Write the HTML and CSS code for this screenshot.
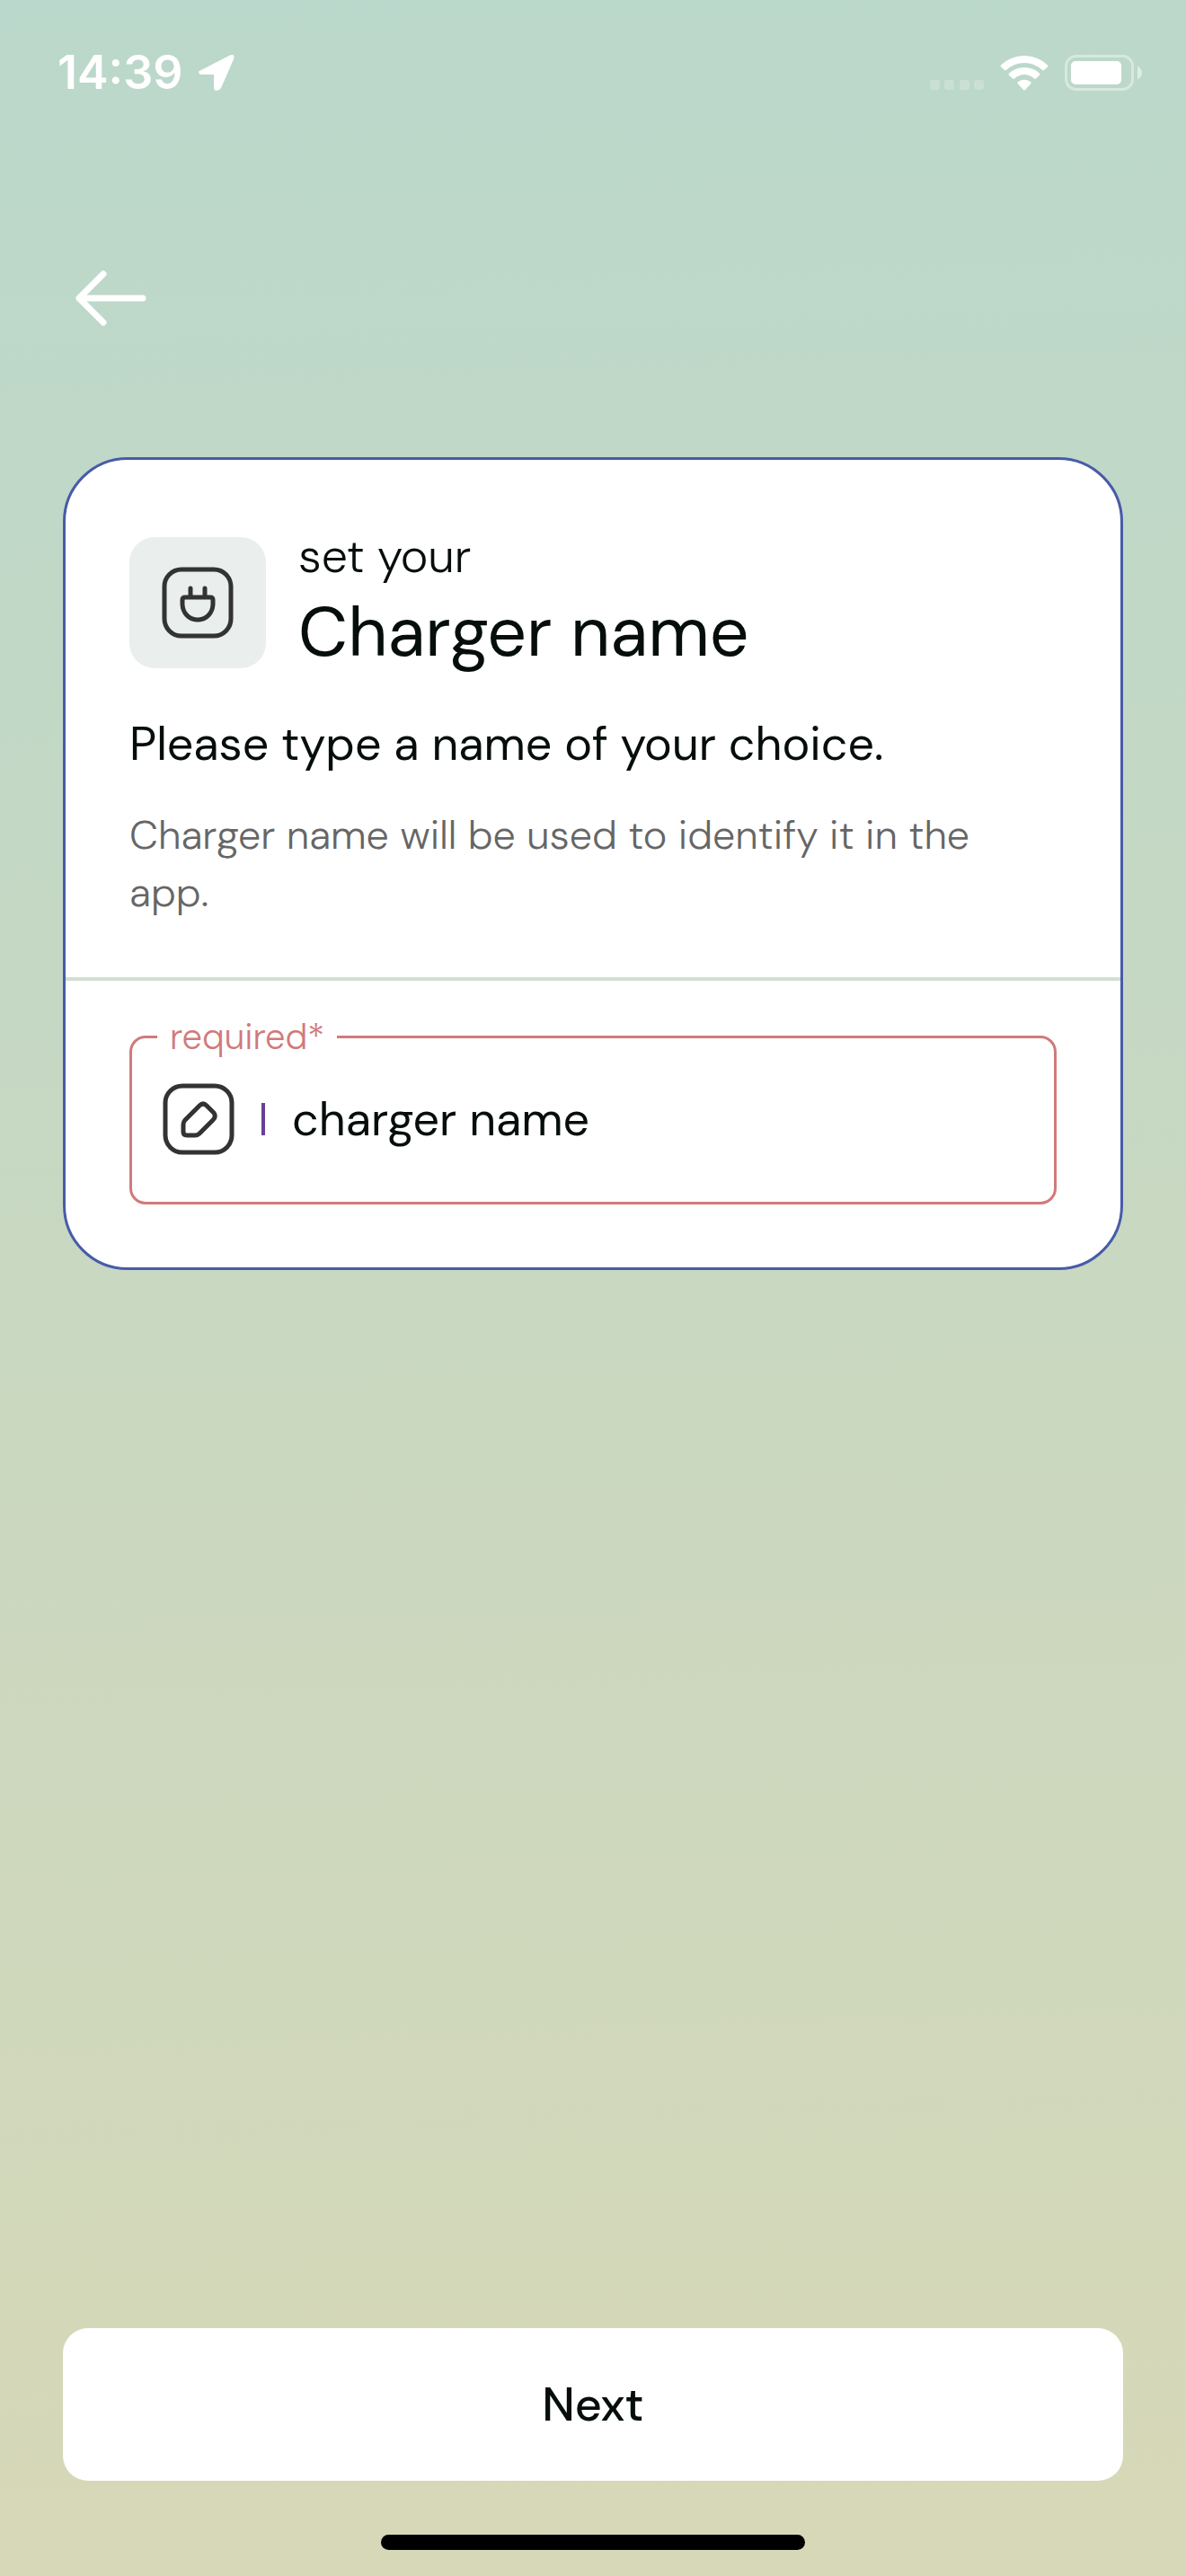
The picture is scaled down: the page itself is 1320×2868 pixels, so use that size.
FILE: index.html
```
<!DOCTYPE html>
<html lang="en">
<head>
    <meta charset="UTF-8">
    <meta name="viewport" content="width=device-width, initial-scale=1.0">
    <title>Charger name</title>
    <link rel="stylesheet" href="styles.css">
</head>
<body>
<div class="screen">
    <header class="status-bar">
        <div class="status-left">
            <span class="time">14:39</span>
            <svg class="location" width="42" height="42" viewBox="0 0 42 42" aria-hidden="true">
                <path d="M4 18 L35 2 Q42 -1 40 6 L26 38 Q24 41 21 41 Q18 41 18 37 V23 H5 Q1 23 1 20 Q1 19 4 18 Z" fill="#fff"/>
            </svg>
        </div>
        <div class="status-right">
            <svg width="60" height="40" viewBox="0 0 60 40" aria-hidden="true">
                <g fill="#fff" fill-opacity="0.22">
                    <rect x="0" y="28" width="11" height="11" rx="3"/>
                    <rect x="16" y="28" width="11" height="11" rx="3"/>
                    <rect x="33" y="28" width="11" height="11" rx="3"/>
                    <rect x="49" y="28" width="11" height="11" rx="3"/>
                </g>
            </svg>
            <svg width="54" height="40" viewBox="0 0 54 40" aria-hidden="true">
                <g fill="#fff">
                    <path d="M1 11.500 Q0 12.500 1 13.500 L5 17 Q6 17.700 7 17 Q16 9 27 9 Q38 9 47 17 Q48 17.700 49 17 L53 13.500 Q54 12.500 53 11.500 Q42 1 27 1 Q12 1 1 11.500 Z"/>
                    <path d="M10 20.700 Q9 21.700 10 22.700 L14 26.500 Q15 27.200 16 26.500 Q21 22 27 22 Q33 22 38 26.500 Q39 27.200 40 26.500 L44 22.700 Q45 21.700 44 20.700 Q37 14 27 14 Q17 14 10 20.700 Z"/>
                    <path d="M20 30 Q18.500 31 20 32.500 L26 39 Q27 40 28 39 L34 32.500 Q35.500 31 34 30 Q27 25.500 20 30 Z"/>
                </g>
            </svg>
            <svg width="87" height="40" viewBox="0 0 87 40" aria-hidden="true">
                <rect x="1.500" y="1.500" width="74" height="37" rx="11" fill="none" stroke="#fff" stroke-opacity="0.42" stroke-width="3"/>
                <rect x="7" y="7" width="56" height="26" rx="5" fill="#fff"/>
                <path d="M81 12.500 Q86 15.500 86 20 Q86 24.500 81 27.500 Z" fill="#fff" fill-opacity="0.5"/>
            </svg>
        </div>
    </header>

    <nav class="top-nav">
        <button type="button" class="back" aria-label="Back">
            <svg width="80" height="64" viewBox="0 0 80 64" aria-hidden="true">
                <path d="M75 32 H5 M31 5 L4 32 L31 59" fill="none" stroke="#fff" stroke-width="7" stroke-linecap="round" stroke-linejoin="round"/>
            </svg>
        </button>
    </nav>

    <form class="form" id="chargerForm">
        <section class="card">
            <div class="card-top">
                <div class="card-header">
                    <span class="icon-tile">
                        <svg width="80" height="80" viewBox="0 0 80 80" aria-hidden="true">
                            <g fill="none" stroke="#333" stroke-width="5" stroke-linecap="round" stroke-linejoin="round">
                                <rect x="3" y="3" width="74" height="74" rx="19"/>
                                <path d="M32 24 V33 M48 24 V33"/>
                                <path d="M26 34 H54 Q57 34 57 37 V42 A16 18 0 0 1 41 59 H39 A16 18 0 0 1 23 42 V37 Q23 34 26 34 Z"/>
                            </g>
                        </svg>
                    </span>
                    <h1 class="heading">
                        <span class="heading-small">set your</span>
                        <span class="heading-large">Charger name</span>
                    </h1>
                </div>
                <p class="lead">Please type a name of your choice.</p>
                <p class="hint">Charger name will be used to identify it in the app.</p>
            </div>
            <div class="card-bottom">
                <fieldset class="field">
                    <legend><label for="chargerName">required*</label></legend>
                    <div class="field-row">
                        <svg width="80" height="80" viewBox="0 0 80 80" aria-hidden="true">
                            <g fill="none" stroke="#333" stroke-width="5" stroke-linecap="round" stroke-linejoin="round">
                                <rect x="3" y="3" width="74" height="74" rx="19"/>
                                <path d="M41 25 L25 41 Q23 43 23 46 V54 Q23 58 27 58 H36 Q39 58 41 56 L56 41 Q60 37 57 33 L49 25 Q45 21 41 25 Z"/>
                            </g>
                        </svg>
                        <span class="bar"></span>
                        <input type="text" id="chargerName" placeholder="charger name" required>
                    </div>
                </fieldset>
            </div>
        </section>
        <button type="submit" class="next">Next</button>
    </form>

    <div class="home-indicator"></div>
</div>
</body>
</html>
```
FILE: styles.css
```
* {
    box-sizing: border-box;
}

body, h1, p {
    margin: 0;
    padding: 0;
}

body {
    font-family: "DM Sans", "Open Sans", sans-serif;
    color: #060e0b;
}

svg {
    display: block;
    flex-shrink: 0;
}

/* Full height screen with the green background */
.screen {
    display: flex;
    flex-direction: column;
    min-height: 100vh;
    background: linear-gradient(178deg, #bad8cb, #d7d8b7);
}

/* Status bar */
.status-bar {
    display: flex;
    justify-content: space-between;
    align-items: center;
    height: 162px;
    padding: 0 48px 0 64px;
}

.status-left {
    display: flex;
    align-items: center;
    gap: 16px;
}

.status-right {
    display: flex;
    align-items: center;
    gap: 18px;
}

.time {
    font-family: Inter, sans-serif;
    font-size: 52px;
    font-weight: 600;
    line-height: 64px;
    color: #fff;
}

/* Back button */
.top-nav {
    padding: 138px 84px 145px;
}

.back {
    display: block;
    padding: 0;
    border: none;
    background: none;
    cursor: pointer;
}

.form {
    display: flex;
    flex: 1;
    flex-direction: column;
    justify-content: space-between;
    padding: 0 70px 60px;
}

/* White card */
.card {
    background-color: #fff;
    border: 3px solid #475ba8;
    border-radius: 72px;
}

.card-top {
    padding: 72px 71px 62px;
    border-bottom: 4px solid #d0dfd1;
}

.card-header {
    display: flex;
    align-items: center;
    gap: 36px;
}

.icon-tile {
    display: flex;
    align-items: center;
    justify-content: center;
    width: 152px;
    height: 146px;
    border-radius: 28px;
    background-color: #eaeeed;
}

.heading {
    padding-bottom: 4px;
    font-weight: 400;
}

.heading-small,
.heading-large {
    display: block;
}

.heading-small {
    font-size: 52px;
    font-weight: 300;
    line-height: 70px;
}

.heading-large {
    font-size: 77px;
    line-height: 100px;
}

.lead {
    margin-top: 34px;
    font-size: 52px;
    line-height: 72px;
}

.hint {
    margin-top: 34px;
    padding-right: 48px;
    font-size: 45px;
    font-weight: 300;
    line-height: 64px;
    color: #666;
}

.card-bottom {
    padding: 36px 71px 70px;
}

/* Outlined text box with its label on the border */
.field {
    min-width: 0;
    margin: 0;
    padding: 26px 34px 52px;
    border: 3px solid #d17a7b;
    border-radius: 18px;
}

.field legend {
    margin-left: -6px;
    padding: 0 14px;
    font-size: 40px;
    font-weight: 300;
    line-height: 52px;
    color: #d17a7b;
}

.field-row {
    display: flex;
    align-items: center;
}

.bar {
    width: 4px;
    height: 36px;
    margin: 0 30px;
    background-color: #6a4095;
}

.field input {
    flex: 1;
    min-width: 0;
    padding: 0;
    border: none;
    outline: none;
    background: none;
    font-family: inherit;
    font-size: 52px;
    line-height: 72px;
    color: #060e0b;
}

.field input::placeholder {
    color: #060e0b;
    opacity: 1;
}

/* Bottom button */
.next {
    width: 100%;
    height: 170px;
    border: none;
    border-radius: 28px;
    background-color: #fff;
    font-family: inherit;
    font-size: 52px;
    font-weight: 500;
    color: #060e0b;
    cursor: pointer;
}

.home-indicator {
    width: 472px;
    height: 17px;
    margin: 0 auto 29px;
    border-radius: 9px;
    background-color: #000;
}
```
